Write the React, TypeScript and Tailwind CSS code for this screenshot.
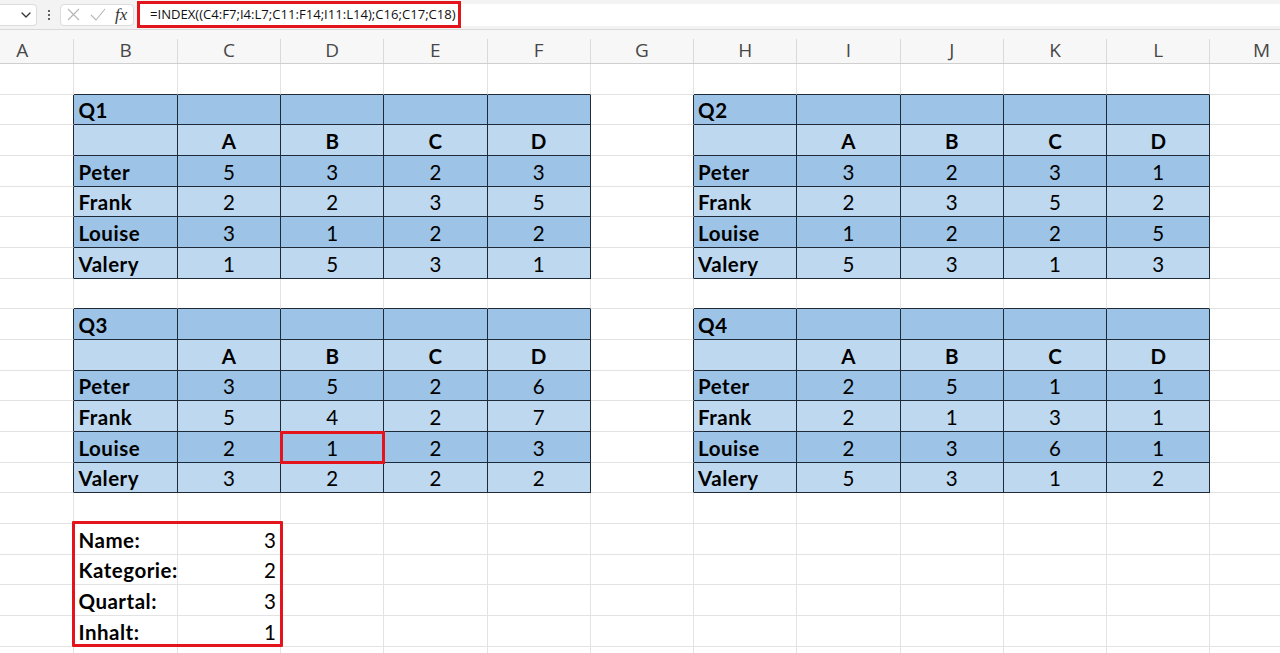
import React from "react";

type Tbl = { r0: number; c0: number; title: string; data: [string, number[]][] };

const TABLES: Tbl[] = [
  { r0: 1, c0: 1, title: "Q1", data: [["Peter", [5, 3, 2, 3]], ["Frank", [2, 2, 3, 5]], ["Louise", [3, 1, 2, 2]], ["Valery", [1, 5, 3, 1]]] },
  { r0: 1, c0: 7, title: "Q2", data: [["Peter", [3, 2, 3, 1]], ["Frank", [2, 3, 5, 2]], ["Louise", [1, 2, 2, 5]], ["Valery", [5, 3, 1, 3]]] },
  { r0: 8, c0: 1, title: "Q3", data: [["Peter", [3, 5, 2, 6]], ["Frank", [5, 4, 2, 7]], ["Louise", [2, 1, 2, 3]], ["Valery", [3, 2, 2, 2]]] },
  { r0: 8, c0: 7, title: "Q4", data: [["Peter", [2, 5, 1, 1]], ["Frank", [2, 1, 3, 1]], ["Louise", [2, 3, 6, 1]], ["Valery", [5, 3, 1, 2]]] },
];

const INFO: [string, number][] = [["Name:", 3], ["Kategorie:", 2], ["Quartal:", 3], ["Inhalt:", 1]];
const COLS = ["A", "B", "C", "D", "E", "F", "G", "H", "I", "J", "K", "L", "M"];
const NROWS = 20;

function tableAt(r: number, c: number): Tbl | null {
  for (const t of TABLES) {
    if (r >= t.r0 && r < t.r0 + 6 && c >= t.c0 && c < t.c0 + 5) return t;
  }
  return null;
}

type CellContent = { text: string; kind: "label" | "num" | "head" | "right" | "none" };

function contentAt(r: number, c: number): CellContent {
  const t = tableAt(r, c);
  if (t) {
    const rr = r - t.r0;
    const cc = c - t.c0;
    if (rr === 0) return cc === 0 ? { text: t.title, kind: "label" } : { text: "", kind: "none" };
    if (rr === 1) return cc === 0 ? { text: "", kind: "none" } : { text: ["A", "B", "C", "D"][cc - 1], kind: "head" };
    const row = t.data[rr - 2];
    if (cc === 0) return { text: row[0], kind: "label" };
    return { text: String(row[1][cc - 1]), kind: "num" };
  }
  if (r >= 15 && r <= 18) {
    const info = INFO[r - 15];
    if (c === 1) return { text: info[0], kind: "label" };
    if (c === 2) return { text: String(info[1]), kind: "right" };
  }
  return { text: "", kind: "none" };
}

function Cell({ r, c }: { r: number; c: number }) {
  const t = tableAt(r, c);
  const darkR = !!t || !!tableAt(r, c + 1);
  const darkB = !!t || !!tableAt(r + 1, c);
  let bg = "bg-white";
  if (t) bg = (r - t.r0) % 2 === 0 ? "bg-[#9dc3e6]" : "bg-[#bed8ef]";
  const content = contentAt(r, c);
  const align =
    content.kind === "label"
      ? "justify-start pl-[4px] font-bold tracking-[0.5px]"
      : content.kind === "head"
      ? "justify-center font-bold"
      : content.kind === "right"
      ? "justify-end pr-[4px]"
      : "justify-center";
  return (
    <div
      style={{ gridColumn: c + 1, gridRow: r + 1 }}
      className={[
        "flex items-center pt-[2px] text-[20.5px] leading-none text-black overflow-hidden whitespace-nowrap",
        bg,
        align,
        "border-r border-b",
        darkR ? "border-r-[#1e2a38]" : "border-r-[#e3e3e3]",
        darkB ? "border-b-[#1e2a38]" : "border-b-[#e3e3e3]",
      ].join(" ")}
    >
      {content.text}
    </div>
  );
}

function FormulaBar() {
  return (
    <div className="flex h-[30px] items-center border-b border-[#d9d9d9] bg-[#f3f3f3]">
      <div className="flex h-[22px] w-[37px] items-center justify-end rounded-r-[4px] border border-l-0 border-[#dcdcdc] bg-white pr-[5px]">
        <svg width="10" height="6" viewBox="0 0 10 6" fill="none">
          <path d="M1 1l4 4 4-4" stroke="#333" strokeWidth="1.3" strokeLinecap="round" strokeLinejoin="round" />
        </svg>
      </div>
      <div className="flex w-[23px] flex-col items-center justify-center gap-[2px]">
        <span className="block h-[2px] w-[2px] rounded-full bg-[#333]" />
        <span className="block h-[2px] w-[2px] rounded-full bg-[#333]" />
        <span className="block h-[2px] w-[2px] rounded-full bg-[#333]" />
      </div>
      <div className="flex h-[22px] w-[74px] items-center rounded-[4px] border border-[#dcdcdc] bg-white pl-[6px]">
        <svg width="13" height="13" viewBox="0 0 13 13" fill="none">
          <path d="M1 1l11 11M12 1L1 12" stroke="#b5b5b5" strokeWidth="1.1" />
        </svg>
        <svg className="ml-[10px]" width="16" height="13" viewBox="0 0 16 13" fill="none">
          <path d="M1 7l5 5L15 1" stroke="#b5b5b5" strokeWidth="1.1" />
        </svg>
        <span className="ml-[9px] font-['Liberation_Serif',serif] text-[17px] italic leading-none text-[#333]">fx</span>
      </div>
      <div className="ml-[3px] flex h-[22px] flex-1 items-center bg-white">
        <div className="-my-[2px] flex h-[27px] w-[324px] items-center border-[3px] border-[#e3141c] pl-[10px] font-['Open_Sans',sans-serif] text-[13.1px] text-[#111]">
          =INDEX((C4:F7;I4:L7;C11:F14;I11:L14);C16;C17;C18)
        </div>
      </div>
    </div>
  );
}

export default function App() {
  const rows = Array.from({ length: NROWS }, (_, r) => r);
  const cols = Array.from({ length: 13 }, (_, c) => c);
  return (
    <div className="h-[653px] w-[1280px] overflow-hidden bg-white font-['Lato',sans-serif]">
      <FormulaBar />
      <div className="-ml-[28.8px] grid h-[34px] grid-cols-[repeat(13,103.27px)] border-b border-[#cfcfcf] bg-[#f7f7f7]">
        {COLS.map((l) => (
          <div key={l} className="flex items-end">
            <div className="flex h-[24px] w-full items-center justify-center border-r border-[#dadada] pb-[1px] font-['Open_Sans',sans-serif] text-[19px] leading-none text-[#474747]">
              {l}
            </div>
          </div>
        ))}
      </div>
      <div className="-ml-[28.8px] grid grid-cols-[repeat(13,103.27px)] grid-rows-[repeat(20,30.68px)]">
        {rows.map((r) => cols.map((c) => <Cell key={`${r}-${c}`} r={r} c={c} />))}
        <div
          style={{ gridColumn: "4 / 5", gridRow: "13 / 14" }}
          className="pointer-events-none -mb-[1.5px] -ml-[1.5px] -mr-[0.5px] -mt-[1.5px] border-[3px] border-[#e3141c]"
        />
        <div
          style={{ gridColumn: "2 / 4", gridRow: "16 / 20" }}
          className="pointer-events-none -mb-[0.5px] -ml-[2.5px] -mr-[2px] -mt-[3px] rounded-[1px] border-[3px] border-[#e3141c]"
        />
      </div>
    </div>
  );
}
